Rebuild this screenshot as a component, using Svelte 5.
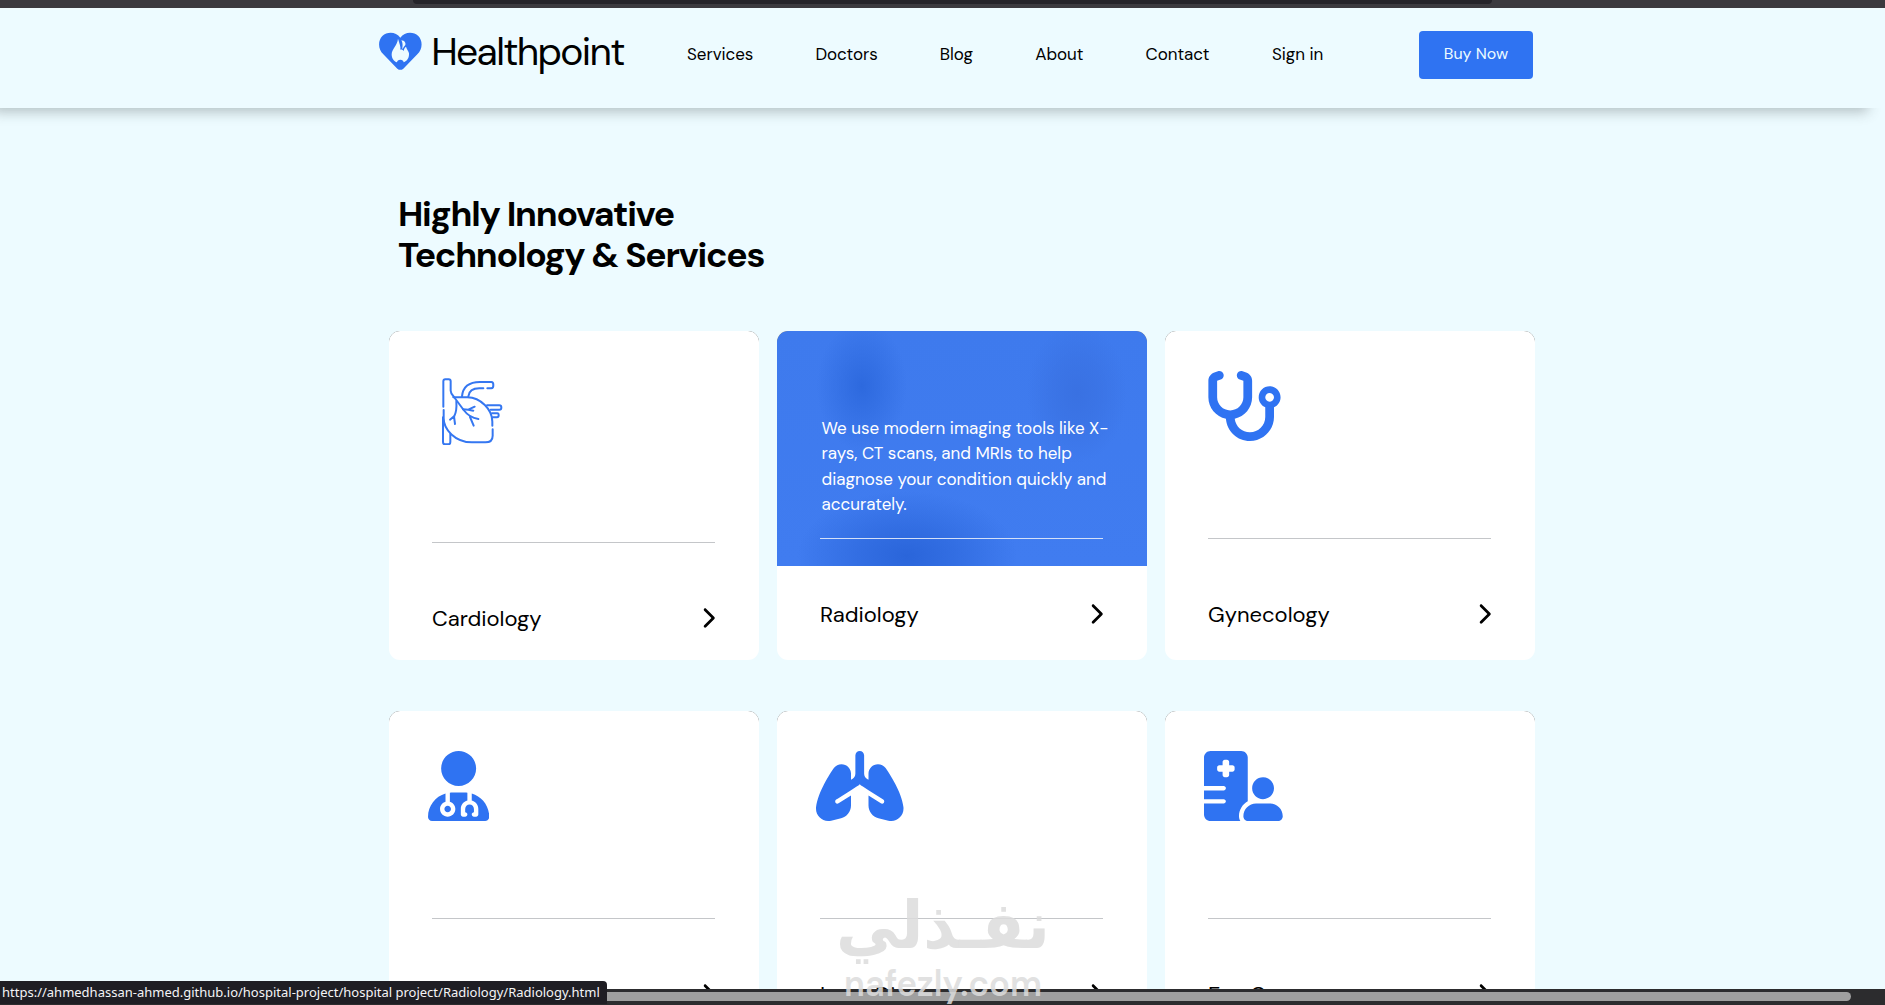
<script>
  const links = [
    { label: "Services", width: 66 },
    { label: "Doctors", width: 62 },
    { label: "Blog", width: 33 },
    { label: "About", width: 48 },
    { label: "Contact", width: 64 },
    { label: "Sign in", width: 52 },
  ]

  const icons = {
    stethoscope: {
      width: 576,
      path: "M142.4 21.9c5.6 16.8-3.5 34.9-20.2 40.5L96 71.1V192c0 53 43 96 96 96s96-43 96-96V71.1l-26.1-8.7c-16.8-5.6-25.8-23.7-20.2-40.5s23.7-25.8 40.5-20.2l26.1 8.7C334.4 19.1 352 43.5 352 71.1V192c0 77.2-54.6 141.6-127.3 156.7C231 404.6 278.4 448 336 448c61.9 0 112-50.1 112-112V265.3c-28.3-12.3-48-40.5-48-73.3c0-44.2 35.8-80 80-80s80 35.8 80 80c0 32.8-19.7 61-48 73.3V336c0 97.2-78.8 176-176 176c-92.9 0-168.9-71.9-175.5-163.1C87.2 334.2 32 269.6 32 192V71.1c0-27.5 17.6-52 43.8-60.7l26.1-8.7c16.8-5.6 34.9 3.5 40.5 20.2zM480 224c17.7 0 32-14.3 32-32s-14.3-32-32-32s-32 14.3-32 32s14.3 32 32 32z",
    },
    doctor: {
      width: 448,
      path: "M224 256c70.7 0 128-57.3 128-128S294.7 0 224 0S96 57.3 96 128s57.3 128 128 128zm-96 55.2C54 332.9 0 401.3 0 482.3C0 498.7 13.3 512 29.7 512H418.3c16.4 0 29.7-13.3 29.7-29.7c0-81-54-149.4-128-171.1V362c27.6 7.1 48 32.2 48 62v40c0 8.8-7.2 16-16 16H336c-8.8 0-16-7.2-16-16s7.2-16 16-16V424c0-17.7-14.3-32-32-32s-32 14.3-32 32v24c8.8 0 16 7.2 16 16s-7.2 16-16 16H256c-8.8 0-16-7.2-16-16V424c0-29.8 20.4-54.9 48-62V304.9c-6-.6-12.1-.9-18.3-.9H178.3c-6.2 0-12.3 .3-18.3 .9v65.4c23.1 6.9 40 28.3 40 53.7c0 30.9-25.1 56-56 56s-56-25.1-56-56c0-25.4 16.9-46.8 40-53.7V311.2zM144 448c13.3 0 24-10.7 24-24s-10.7-24-24-24s-24 10.7-24 24s10.7 24 24 24z",
    },
    lungs: {
      width: 640,
      path: "M320 0c17.7 0 32 14.3 32 32V164.1c0 16.4 8.4 31.7 22.2 40.5l9.8 6.2V165.3C384 127 415 96 453.3 96c21.7 0 42.8 10.2 55.8 28.8c15.4 22.1 44.3 65.4 71 116.9c26.5 50.9 52.4 112.5 59.6 170.3c.2 1.3 .2 2.6 .2 4v7c0 49.1-39.8 89-89 89c-7.3 0-14.5-.9-21.6-2.7l-72.7-18.2C414 480.5 384 442.1 384 398V325l90.5 57.6c7.5 4.7 17.3 2.5 22.1-4.9s2.5-17.3-4.9-22.1L384 287.1v-.4l-44.1-28.1c-7.3-4.6-13.9-10.1-19.9-16.1c-5.9 6-12.6 11.5-19.9 16.1L256 286.7 161.2 347l-13.5 8.6c0 0 0 0-.1 0c-7.4 4.8-9.6 14.6-4.8 22.1c4.7 7.5 14.6 9.7 22.1 4.9l91.1-58V398c0 44.1-30 82.5-72.7 93.1l-72.7 18.2c-7.1 1.8-14.3 2.7-21.6 2.7c-49.1 0-89-39.8-89-89v-7c0-1.3 .1-2.7 .2-4c7.2-57.9 33.1-119.4 59.6-170.3c26.8-51.5 55.6-94.8 71-116.9c13-18.6 34-28.8 55.8-28.8C225 96 256 127 256 165.3v45.5l9.8-6.2c13.8-8.8 22.2-24.1 22.2-40.5V32c0-17.7 14.3-32 32-32z",
    },
    hospitalUser: {
      width: 576,
      path: "M48 0C21.5 0 0 21.5 0 48V256H144c8.8 0 16 7.2 16 16s-7.2 16-16 16H0v64H144c8.8 0 16 7.2 16 16s-7.2 16-16 16H0v80c0 26.5 21.5 48 48 48H265.9c-6.3-10.2-9.9-22.2-9.9-35.1c0-46.9 25.8-87.8 64-109.2V271.8 48c0-26.5-21.5-48-48-48H48zM152 64h16c8.8 0 16 7.2 16 16v24h24c8.8 0 16 7.2 16 16v16c0 8.8-7.2 16-16 16H184v24c0 8.8-7.2 16-16 16H152c-8.8 0-16-7.2-16-16V152H112c-8.8 0-16-7.2-16-16V120c0-8.8 7.2-16 16-16h24V80c0-8.8 7.2-16 16-16zM512 272c0 44.2-35.8 80-80 80s-80-35.8-80-80s35.8-80 80-80s80 35.8 80 80zM288 477.1c0 19.3 15.6 34.9 34.9 34.9H541.1c19.3 0 34.9-15.6 34.9-34.9c0-51.4-41.7-93.1-93.1-93.1H381.1c-51.4 0-93.1 41.7-93.1 93.1z",
    },
  }

  const services = [
    { title: "Cardiology", heart: true },
    {
      title: "Radiology",
      text: "We use modern imaging tools like X-rays, CT scans, and MRIs to help diagnose your condition quickly and accurately.",
    },
    { title: "Gynecology", icon: icons.stethoscope },
    { title: "Doctors", icon: icons.doctor },
    { title: "Lung Disease", icon: icons.lungs },
    { title: "Eye Care", icon: icons.hospitalUser },
  ]
</script>

<div class="page">
  <div class="chrome"><div class="address"></div></div>

  <header>
    <a class="brand" href="#home">
      <svg viewBox="54 96 134 117" width="44.67" height="39">
        <path
          fill="#2f73f2"
          d="M121 113C108 95 82 94 67 108C53 123 54 147 70 163L112 206Q121 213 130 206L172 163C188 147 189 123 175 108C160 94 134 95 121 113Z"
        />
        <path
          fill="#edfbff"
          d="M114 116C112 137 96 145 95 163C95 176 102 185 111 187Q112 179 121 179Q130 179 131 187C141 184 148 174 147 160C146 153 140 148 138 140C134 143 132 147 131 153C128 150 128 147 121 149C123 141 118 130 114 116Z"
        />
        <path fill="#edfbff" d="M124 121C134 122 138 129 136 135Q132 139 127 148C127 140 130 132 124 121Z" />
      </svg>
      <span>Healthpoint</span>
    </a>
    <nav>
      {#each links as link}
        <a href="#{link.label}" style="width: {link.width}px">{link.label}</a>
      {/each}
    </nav>
    <button>Buy Now</button>
  </header>

  <main>
    <h1>Highly Innovative<br />Technology &amp; Services</h1>

    <div class="cards">
      {#each services as service}
        <article class="card" class:active={service.text}>
          <div class="cover" class:tall={service.heart}>
            <div class="media">
              {#if service.text}
                <p>{service.text}</p>
              {:else if service.heart}
                <svg class="heart" viewBox="144 153 240 222" width="80" height="74">
                  <path d="M190 260V184Q190 178 196 178H206Q212 178 212 184V212Q212 221 222 231L251 270Q268 293 295 297" />
                  <path d="M246 229Q250 186 300 186H334Q340 186 340 195Q340 205 334 205H322M310 205H298Q268 205 265 229" />
                  <path d="M220 232H262C302 233 337 268 337 305V317" />
                  <path d="M338 328V347Q338 367 316 367H276C225 367 191 328 191 295V270" />
                  <path d="M189 292V366Q189 373 195 373H205Q211 373 211 366V342" />
                  <path d="M321 256H358Q364 256 364 263Q364 269 358 269H332M336 280H352Q356 280 356 286Q356 292 351 292H339" />
                  <path d="M229 244Q231 272 223 288L210 299M222 289L225 312M249 268L265 269L284 260M265 269L280 272M270 291L281 317" />
                </svg>
              {:else}
                <svg
                  viewBox="0 0 {service.icon.width} 512"
                  width={(service.icon.width / 512) * 70}
                  height="70"
                >
                  <path fill="#2f73f2" d={service.icon.path} />
                </svg>
              {/if}
            </div>
            <hr />
          </div>
          <div class="caption">
            <h2>{service.title}</h2>
            <svg viewBox="0 0 320 512" width="13.75" height="22">
              <path
                d="M310.6 233.4c12.5 12.5 12.5 32.8 0 45.3l-192 192c-12.5 12.5-32.8 12.5-45.3 0s-12.5-32.8 0-45.3L242.7 256 73.4 86.6c-12.5-12.5-12.5-32.8 0-45.3s32.8-12.5 45.3 0l192 192z"
              />
            </svg>
          </div>
        </article>
      {/each}
    </div>
  </main>

  <div class="scrollbar"><div class="thumb"></div></div>
  <div class="status">
    https://ahmedhassan-ahmed.github.io/hospital-project/hospital project/Radiology/Radiology.html
  </div>

  <svg class="watermark" viewBox="0 0 220 112" width="220" height="112">
    <text class="arabic" x="2" y="55" textLength="214" lengthAdjust="spacingAndGlyphs">نفـذلي</text>
    <text class="latin" x="10" y="103" textLength="198" lengthAdjust="spacingAndGlyphs">nafezly.com</text>
  </svg>
</div>

<style>
  :global(body) {
    margin: 0;
    background: #edfbff;
  }

  .page {
    position: relative;
    height: 1005px;
    overflow: hidden;
    background: #edfbff;
    color: #000;
    font-family: "DM Sans", Lato, sans-serif;
  }

  .chrome {
    height: 8px;
    background: #3b3a3f;
  }
  .address {
    width: 1079px;
    height: 4px;
    margin-left: 413px;
    border-radius: 0 0 5px 5px;
    background: #25242a;
  }

  header {
    display: flex;
    height: 100px;
    box-sizing: border-box;
    padding: 23px 352px 0 378px;
    box-shadow: -12px 9px 12px -5px rgba(60, 70, 70, 0.32);
  }

  a {
    color: inherit;
    text-decoration: none;
  }

  .brand {
    display: flex;
    width: 309px;
    height: 40px;
  }
  .brand svg {
    margin-top: 1px;
  }
  .brand span {
    margin-left: 8.5px;
    font-size: 39px;
    line-height: 42px;
    letter-spacing: -1.65px;
  }

  nav {
    display: flex;
    gap: 62.4px;
    height: 46px;
    align-items: center;
    font-size: 17px;
    letter-spacing: -0.05px;
    white-space: nowrap;
  }

  button {
    width: 114px;
    height: 48px;
    margin-left: auto;
    padding: 0 0 3px;
    border: 0;
    border-radius: 4px;
    background: #2f73f2;
    color: #ecfbff;
    font: inherit;
    font-size: 16px;
  }

  main {
    padding: 86px 0 0 389px;
  }

  h1 {
    margin: 0 0 55px 9px;
    font-size: 35.5px;
    font-weight: 700;
    line-height: 41px;
    letter-spacing: -1.25px;
  }

  .cards {
    display: grid;
    grid-template-columns: repeat(3, 370px);
    gap: 51px 18px;
  }

  .card {
    height: 329px;
    overflow: hidden;
    border-radius: 11px;
    background: linear-gradient(#888 12px, #fff 12px);
  }
  .cover {
    height: 235px;
    box-sizing: border-box;
    padding: 40px 43px 0;
    border-radius: 11px 11px 0 0;
    background: #fff;
  }
  .cover.tall {
    height: 239px;
  }
  .active .cover {
    background:
      radial-gradient(ellipse 45px 65px at 85px 55px, #2d69de, #2d69de99 40%, #2d69de00),
      radial-gradient(ellipse 50px 70px at 300px 62px, #3971e2, #3971e299 50%, #3971e200),
      radial-gradient(ellipse 110px 65px at 130px 225px, #2a65da, #2a65da99 45%, #2a65da00),
      linear-gradient(#3e7aed, #407cf0);
  }

  .media {
    height: 167px;
    margin-left: -4px;
  }
  .tall .media {
    height: 171px;
  }
  .heart {
    fill: none;
    stroke: #3577f1;
    stroke-width: 6;
    stroke-linecap: round;
    stroke-linejoin: round;
  }

  p {
    width: 294px;
    margin: 0 0 0 5.5px;
    padding-top: 45px;
    color: #fff;
    font-size: 17px;
    line-height: 25.4px;
  }

  hr {
    width: 283px;
    height: 1px;
    margin: 0;
    border: 0;
    background: #c4c6c9;
  }
  .active hr {
    background: #d3e0f8;
  }

  .caption {
    display: flex;
    align-items: center;
    justify-content: space-between;
    width: 283px;
    height: 36px;
    padding: 30px 43px 0;
  }

  h2 {
    margin: 0;
    font-size: 22px;
    font-weight: 400;
  }

  .scrollbar {
    position: absolute;
    right: 0;
    bottom: 0;
    left: 0;
    height: 13px;
    padding-top: 3px;
    background: #2c2c2e;
  }
  .thumb {
    width: 1851px;
    height: 9px;
    border-radius: 5px;
    background: #9f9f9f;
  }

  .status {
    position: absolute;
    bottom: 1px;
    left: 0;
    width: 605px;
    height: 23px;
    padding-left: 2px;
    border-radius: 0 4px 0 0;
    background: #1f1e24;
    color: #f4f4f6;
    font: 13px/22px "Noto Sans", sans-serif;
    white-space: nowrap;
  }

  .watermark {
    position: absolute;
    top: 893px;
    left: 834px;
    fill: #dcdcdc;
    opacity: 0.85;
  }
  .arabic {
    font: bold 66px "DejaVu Sans", sans-serif;
  }
  .latin {
    font: 600 36px "DM Sans", Lato, sans-serif;
  }
</style>
